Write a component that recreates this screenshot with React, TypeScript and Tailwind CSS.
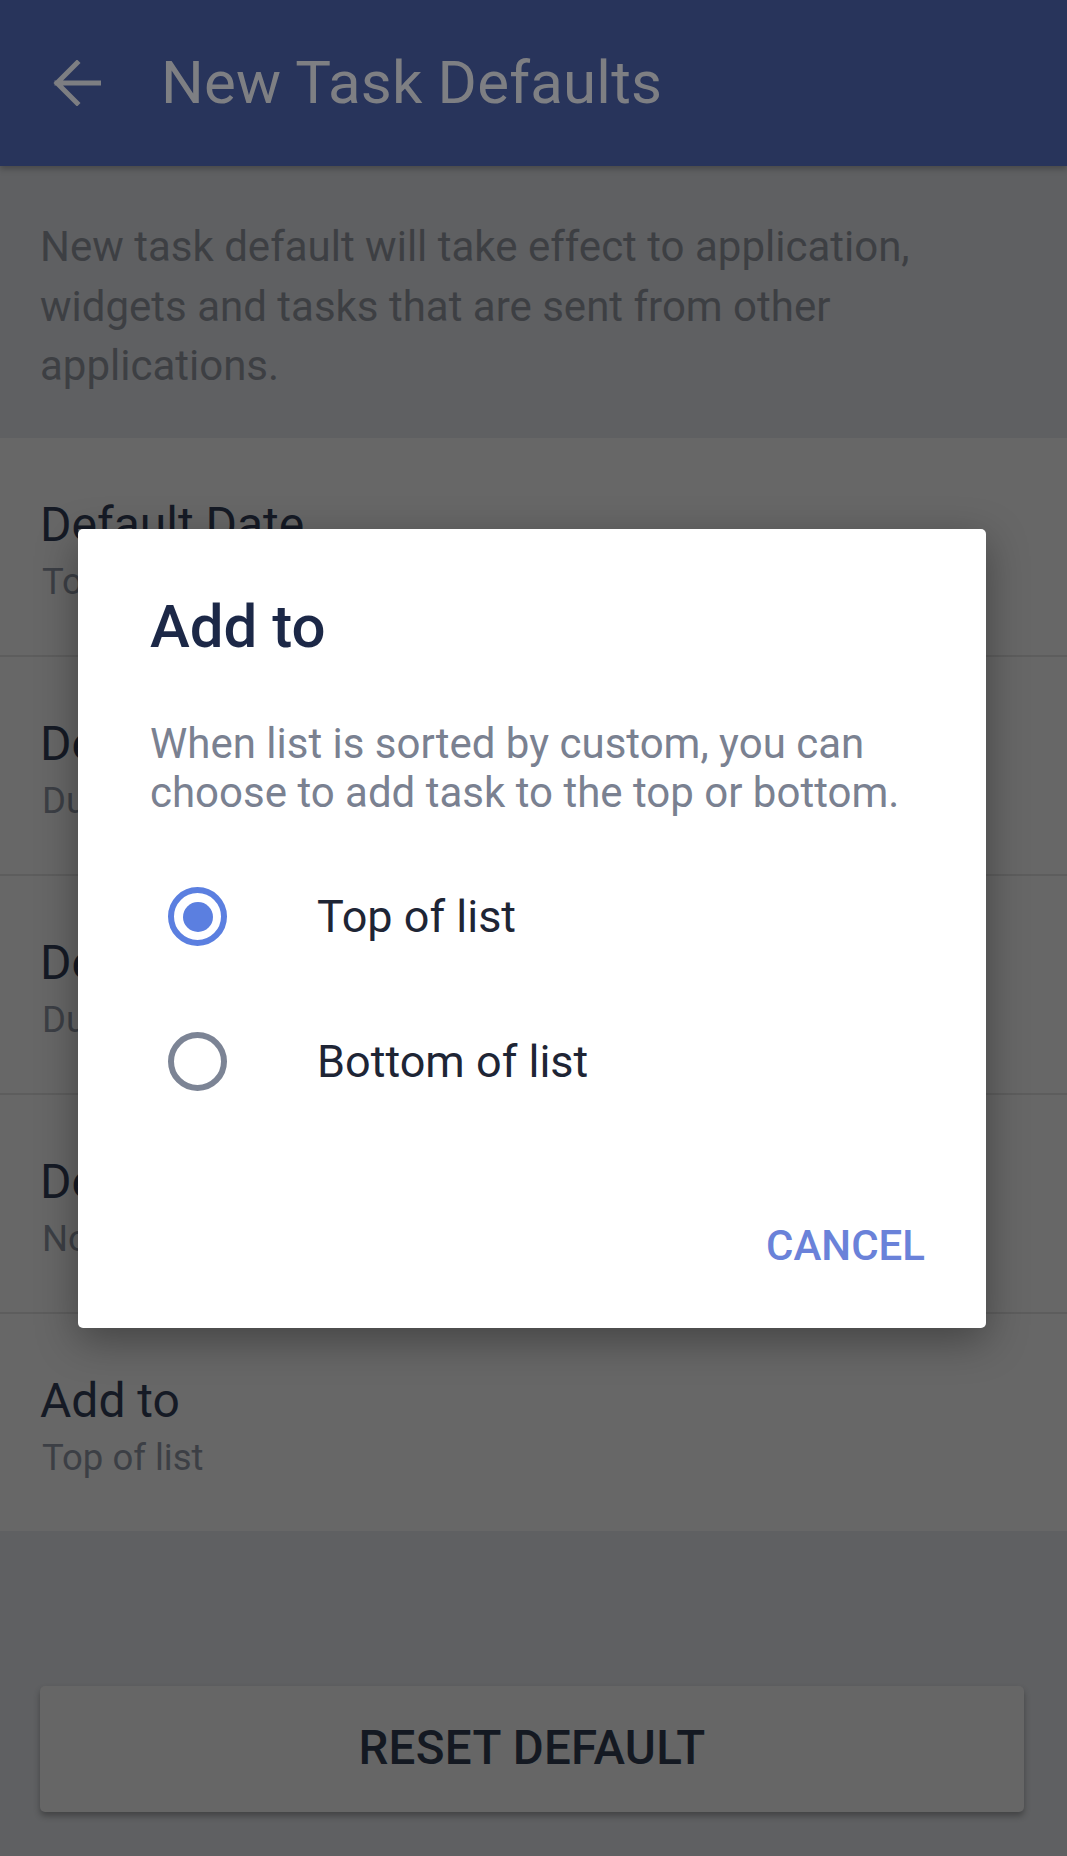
import React from "react";

const items = [
  { title: "Default Date", sub: "Today" },
  { title: "Default Time", sub: "Due time" },
  { title: "Default Reminder", sub: "Due date" },
  { title: "Default Priority", sub: "None" },
  { title: "Add to", sub: "Top of list" },
];

function Radio({ checked }: { checked: boolean }) {
  return (
    <div
      className={
        checked
          ? "w-[59px] h-[59px] rounded-full border-[6px] border-[#5b7fe0] flex items-center justify-center shrink-0"
          : "w-[59px] h-[59px] rounded-full border-[6px] border-[#7c8495] shrink-0"
      }
    >
      {checked && <div className="w-[30px] h-[30px] rounded-full bg-[#5b7fe0]" />}
    </div>
  );
}

export default function App() {
  return (
    <div
      className="relative w-[1067px] h-[1856px] bg-[#5f6062] overflow-hidden flex flex-col"
      style={{ fontFamily: "Roboto, 'Noto Sans', sans-serif" }}
    >
      {/* Header */}
      <div className="h-[166px] shrink-0 bg-[#28345b] flex items-center shadow-[0_3px_6px_rgba(0,0,0,0.25)] relative z-10">
        <div className="w-[161px] flex items-center pl-[53px]">
          <svg width="48" height="46" viewBox="0 0 48 46" fill="none">
            <path
              d="M46 23H4M24 3L4 23l20 20"
              stroke="#7d7e82"
              strokeWidth="5"
              strokeLinecap="square"
              strokeLinejoin="miter"
            />
          </svg>
        </div>
        <div className="text-[60px] leading-none text-[#7e7f83] tracking-[0.2px]">New Task Defaults</div>
      </div>

      {/* Description */}
      <div className="h-[272px] shrink-0 bg-[#5f6062] pl-[40px] pr-[20px] pt-[51px]">
        <p className="text-[42px] leading-[59.5px] text-[#3d3f43]">
          New task default will take effect to application,
          <br />
          widgets and tasks that are sent from other
          <br />
          applications.
        </p>
      </div>

      {/* List */}
      <div className="bg-[#676767] shrink-0 flex flex-col">
        {items.map((it, i) => (
          <div
            key={i}
            className={
              i < items.length - 1
                ? "h-[219px] pl-[40px] pt-[59px] border-b-2 border-[#5d5d5d] flex flex-col"
                : "h-[217px] pl-[40px] pt-[59px] flex flex-col"
            }
          >
            <div className="text-[48px] leading-[56px] text-[#151a25]">{it.title}</div>
            <div className="mt-[8px] text-[36.5px] leading-[42px] text-[#3c3f45] pl-[2px]">{it.sub}</div>
          </div>
        ))}
      </div>

      {/* Spacer + button */}
      <div className="flex-1 flex flex-col justify-end pl-[40px] pr-[43px] pb-[44px]">
        <div className="h-[126px] rounded-[5px] bg-[#666666] shadow-[0_4px_6px_rgba(0,0,0,0.3)] flex items-center justify-center">
          <span className="text-[47.5px] font-medium text-[#141922] tracking-[0.3px]">RESET DEFAULT</span>
        </div>
      </div>

      {/* Dialog */}
      <div className="absolute left-[78px] top-[529px] w-[908px] h-[799px] bg-white rounded-[5px] shadow-[0_12px_40px_rgba(0,0,0,0.35)] z-20 flex flex-col">
        <div className="px-[72px] pt-[63px]">
          <div className="text-[60px] leading-[70px] font-medium text-[#1c2847]">Add to</div>
          <p className="mt-[57px] text-[42px] leading-[49px] text-[#7a8191]">
            When list is sorted by custom, you can
            <br />
            choose to add task to the top or bottom.
          </p>
        </div>
        <div className="mt-[27px] flex flex-col">
          <div className="h-[145px] flex items-center pl-[90px]">
            <Radio checked={true} />
            <span className="ml-[90px] text-[45px] text-[#1e2535]">Top of list</span>
          </div>
          <div className="h-[145px] flex items-center pl-[90px]">
            <Radio checked={false} />
            <span className="ml-[90px] text-[45px] text-[#1e2535]">Bottom of list</span>
          </div>
        </div>
        <div className="mt-[87px] flex justify-end pr-[61px]">
          <span className="text-[42px] leading-[50px] font-medium text-[#6a82d9]">CANCEL</span>
        </div>
      </div>
    </div>
  );
}
